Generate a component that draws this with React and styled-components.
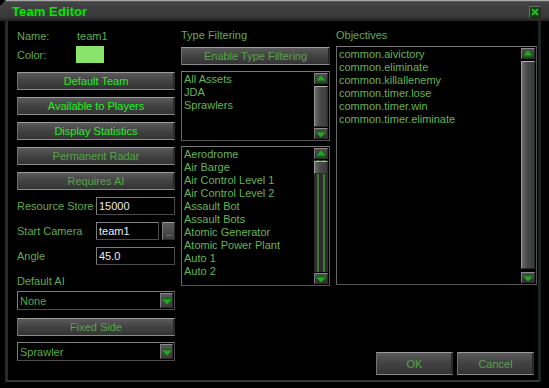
import React from 'react';
import styled, { createGlobalStyle } from 'styled-components';

const Global = createGlobalStyle`
  html, body { margin: 0; padding: 0; background: #000; }
  body { font-family: "Liberation Sans", Arial, sans-serif; }
  * { box-sizing: border-box; }
`;

const Window = styled.div`
  width: 549px;
  height: 388px;
  background: #000;
  display: flex;
  flex-direction: column;
  overflow: hidden;
`;

const TitleBar = styled.div`
  height: 21px;
  flex: none;
  display: flex;
  align-items: center;
  justify-content: space-between;
  padding: 2px 8px 0 12px;
  background: linear-gradient(#a8a8a8 0 1px, #5a5a5a 1px 2px, #444 2px, #383838 80%, #222 100%);
  clip-path: polygon(6px 0, 100% 0, 100% 100%, 0 100%, 0 6px);
`;

const Title = styled.div`
  font-size: 13px;
  font-weight: bold;
  color: #00e800;
  letter-spacing: 0.1px;
`;

const CloseBox = styled.div`
  width: 12px;
  height: 12px;
  background: #143c14;
  border: 1px solid;
  border-color: #6a6a6a #2a2a2a #2a2a2a #6a6a6a;
  display: flex;
  align-items: center;
  justify-content: center;
`;

const Frame = styled.div`
  flex: 1;
  margin: 0 8px 6px 5px;
  border-left: 3px solid #2a2a2a;
  border-right: 3px solid #1c2424;
  border-bottom: 2px solid #363636;
  padding: 8px 1px 0 9px;
  display: grid;
  grid-template-columns: 158px 149px 201px;
  column-gap: 6px;
`;

const Column = styled.div`
  display: flex;
  flex-direction: column;
  min-height: 0;
`;

const Label = styled.div`
  font-size: 11px;
  line-height: 13px;
  height: 13px;
  color: #62aa52;
  white-space: nowrap;
  margin-top: ${p => p.$mt || 0}px;
`;

const FieldRow = styled.div`
  display: flex;
  align-items: center;
  height: ${p => p.$h || 18}px;
  margin-top: ${p => p.$mt || 0}px;
`;

const FieldLabel = styled.div`
  width: ${p => p.$w || 60}px;
  flex: none;
  font-size: 11px;
  color: #62aa52;
  white-space: nowrap;
`;

const ValueText = styled.div`
  font-size: 11px;
  color: #62aa52;
`;

const Swatch = styled.div`
  width: 28px;
  height: 17px;
  background: #88e46a;
`;

const Button = styled.button`
  display: block;
  width: ${p => (p.$w ? `${p.$w}px` : '100%')};
  height: ${p => p.$h || 18}px;
  margin: ${p => p.$mt || 0}px 0 0 0;
  padding: 0;
  font-family: "Liberation Sans", Arial, sans-serif;
  font-size: 11px;
  color: ${p => (p.$active ? '#1ef01e' : '#56a448')};
  background: linear-gradient(#5a5a5a, #444 45%, #333 100%);
  border: 1px solid;
  border-color: #9c9c9c #2e2e2e #8a8a8a #707070;
  box-shadow: inset -1px 0 0 #262626;
`;

const Input = styled.div`
  width: ${p => p.$w || 79}px;
  height: 18px;
  flex: none;
  background: #000;
  border: 1px solid;
  border-color: #7c7c7c #4c4c4c #4c4c4c #7c7c7c;
  font-size: 11px;
  color: #ececec;
  padding: 2px 0 0 2px;
`;

const DotsButton = styled.div`
  width: 13px;
  height: 18px;
  margin-left: 3px;
  flex: none;
  background: linear-gradient(#5a5a5a, #3c3c3c);
  border: 1px solid;
  border-color: #9a9a9a #2a2a2a #2a2a2a #7a7a7a;
  color: #7e9e7e;
  font-size: 10px;
  line-height: 20px;
  text-align: center;
  letter-spacing: -1px;
  overflow: hidden;
`;

const Select = styled.div`
  height: 19px;
  margin-top: ${p => p.$mt || 0}px;
  border: 1px solid;
  border-color: #7c7c7c #4c4c4c #4c4c4c #7c7c7c;
  display: flex;
  align-items: center;
  justify-content: space-between;
  padding: 0 1px 0 2px;
  font-size: 11px;
  color: #5aaa4a;
`;

const SelectArrow = styled.div`
  width: 13px;
  height: 15px;
  background: linear-gradient(#585858, #3a3a3a);
  border: 1px solid;
  border-color: #8a8a8a #2a2a2a #2a2a2a #7a7a7a;
  display: flex;
  align-items: center;
  justify-content: center;
`;

const ListBox = styled.div`
  height: ${p => p.$h}px;
  margin-top: ${p => p.$mt || 0}px;
  flex: none;
  border: 1px solid;
  border-color: #7a7a7a #555 #555 #6a6a6a;
  display: flex;
  background: #000;
`;

const Items = styled.ul`
  flex: 1;
  margin: 0;
  padding: 1px 0 0 2px;
  list-style: none;
  overflow: hidden;
`;

const Item = styled.li`
  font-size: 11px;
  line-height: 13px;
  color: #66b456;
  white-space: nowrap;
`;

const ScrollBar = styled.div`
  width: 15px;
  flex: none;
  display: flex;
  flex-direction: column;
  padding: 1px 1px 1px 0;
  gap: 1px;
`;

const ArrowBtn = styled.div`
  width: 14px;
  height: 11px;
  flex: none;
  background: linear-gradient(#505050, #303030);
  border: 1px solid;
  border-color: #8a8a8a #2a2a2a #2a2a2a #7a7a7a;
  display: flex;
  align-items: center;
  justify-content: center;
`;

const Track = styled.div`
  flex: 1;
  display: flex;
  flex-direction: column;
  align-items: center;
  background: ${p =>
    p.$striped
      ? 'linear-gradient(to right, #2c2c2c 0 3px, #3f7a34 3px 5px, #2c2c2c 5px 9px, #3f7a34 9px 11px, #2c2c2c 11px)'
      : '#000'};
`;

const Thumb = styled.div`
  width: 14px;
  height: ${p => p.$size}px;
  margin-top: ${p => p.$offset}px;
  background: linear-gradient(to right, #6a6a6a, #4a4a4a 40%, #3a3a3a);
  border: 1px solid;
  border-color: #b0b0b0 #2a2a2a #2a2a2a #9a9a9a;
`;

const BottomRow = styled.div`
  margin-top: auto;
  margin-bottom: 5px;
  padding-right: 3px;
  display: flex;
  justify-content: flex-end;
  gap: 4px;
`;

const UpArrow = () => (
  <svg width="10" height="8" viewBox="0 0 10 8">
    <polygon points="5,0.5 9.5,5.5 0.5,5.5" fill="#1cae1c" />
    <rect x="1" y="6" width="8" height="1.5" fill="#0f6a0f" />
  </svg>
);

const DownArrow = () => (
  <svg width="10" height="8" viewBox="0 0 10 8">
    <rect x="1" y="0.5" width="8" height="1.5" fill="#0f6a0f" />
    <polygon points="0.5,2.5 9.5,2.5 5,7.5" fill="#1cae1c" />
  </svg>
);

const Scroller = ({ offset, size, striped }) => (
  <ScrollBar>
    <ArrowBtn><UpArrow /></ArrowBtn>
    <Track $striped={striped}>
      <Thumb $offset={offset} $size={size} />
    </Track>
    <ArrowBtn><DownArrow /></ArrowBtn>
  </ScrollBar>
);

const typeList = ['All Assets', 'JDA', 'Sprawlers'];
const assetList = [
  'Aerodrome', 'Air Barge', 'Air Control Level 1', 'Air Control Level 2', 'Assault Bot',
  'Assault Bots', 'Atomic Generator', 'Atomic Power Plant', 'Auto 1', 'Auto 2',
];
const objectives = [
  'common.aivictory', 'common.eliminate', 'common.killallenemy',
  'common.timer.lose', 'common.timer.win', 'common.timer.eliminate',
];

export default function App() {
  return (
    <>
      <Global />
      <Window>
        <TitleBar>
          <Title>Team Editor</Title>
          <CloseBox>
            <svg width="8" height="8" viewBox="0 0 8 8">
              <path d="M1 1 L7 7 M7 1 L1 7" stroke="#1fbf1f" strokeWidth="2" />
            </svg>
          </CloseBox>
        </TitleBar>
        <Frame>
          <Column>
            <FieldRow $h={13}>
              <FieldLabel>Name:</FieldLabel>
              <ValueText>team1</ValueText>
            </FieldRow>
            <FieldRow $h={17} $mt={4}>
              <FieldLabel $w={59}>Color:</FieldLabel>
              <Swatch />
            </FieldRow>
            <Button $active $mt={9}>Default Team</Button>
            <Button $active $mt={7}>Available to Players</Button>
            <Button $active $mt={7}>Display Statistics</Button>
            <Button $mt={7}>Permanent Radar</Button>
            <Button $mt={7}>Requires AI</Button>
            <FieldRow $mt={7}>
              <FieldLabel $w={79}>Resource Store</FieldLabel>
              <Input>15000</Input>
            </FieldRow>
            <FieldRow $mt={7}>
              <FieldLabel $w={79}>Start Camera</FieldLabel>
              <Input $w={63}>team1</Input>
              <DotsButton>...</DotsButton>
            </FieldRow>
            <FieldRow $mt={7}>
              <FieldLabel $w={79}>Angle</FieldLabel>
              <Input>45.0</Input>
            </FieldRow>
            <Label $mt={10}>Default AI</Label>
            <Select $mt={3}>
              None
              <SelectArrow><DownArrow /></SelectArrow>
            </Select>
            <Button $mt={8}>Fixed Side</Button>
            <Select $mt={6}>
              Sprawler
              <SelectArrow><DownArrow /></SelectArrow>
            </Select>
          </Column>

          <Column>
            <Label>Type Filtering</Label>
            <Button $mt={5}>Enable Type Filtering</Button>
            <ListBox $h={70} $mt={6}>
              <Items>
                {typeList.map(t => <Item key={t}>{t}</Item>)}
              </Items>
              <Scroller offset={1} size={41} />
            </ListBox>
            <ListBox $h={140} $mt={5}>
              <Items>
                {assetList.map(t => <Item key={t}>{t}</Item>)}
              </Items>
              <Scroller offset={1} size={13} striped />
            </ListBox>
          </Column>

          <Column>
            <Label>Objectives</Label>
            <ListBox $h={239} $mt={4}>
              <Items>
                {objectives.map(t => <Item key={t}>{t}</Item>)}
              </Items>
              <Scroller offset={1} size={208} />
            </ListBox>
            <BottomRow>
              <Button $w={77} $h={23}>OK</Button>
              <Button $w={77} $h={23}>Cancel</Button>
            </BottomRow>
          </Column>
        </Frame>
      </Window>
    </>
  );
}
